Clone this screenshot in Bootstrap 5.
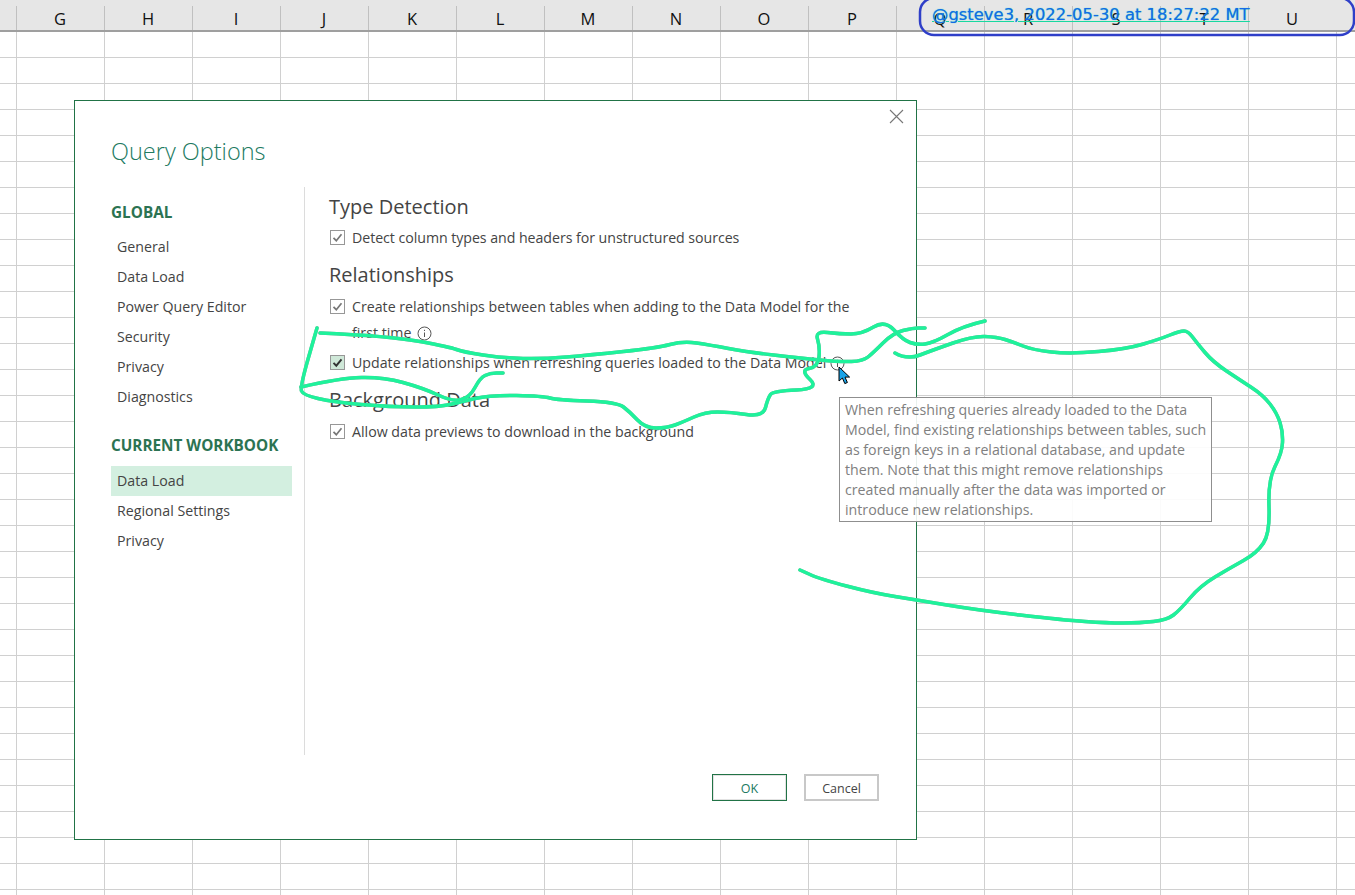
<!DOCTYPE html>
<html lang="en">
<head>
  <meta charset="UTF-8" />
  <title>Query Options</title>
  <link href="https://cdn.jsdelivr.net/npm/bootstrap@5.3.0/dist/css/bootstrap.min.css" rel="stylesheet" />
  <style>
    body {
      width: 1355px;
      height: 895px;
      overflow: hidden;
      position: relative;
      font-family: "Open Sans", sans-serif;
      background-color: #fff;
      background-image:
        linear-gradient(to right, #d0d0d0 1px, transparent 1px),
        linear-gradient(to bottom, #d0d0d0 1px, transparent 1px);
      background-size: 88px 26px;
      background-position: 16px 5px;
    }

    .sheet-head {
      height: 32px;
      background: #e6e6e6;
      border-bottom: 2px solid #9f9f9f;
    }
    .sheet-corner { width: 16px; flex: none; }
    .sheet-col {
      width: 88px;
      flex: none;
      padding-top: 7px;
      text-align: center;
      font-size: 16.5px;
      line-height: 24px;
      color: #111;
      position: relative;
    }
    .sheet-col::before {
      content: "";
      position: absolute;
      left: 0;
      top: 6px;
      bottom: 0;
      width: 1px;
      background: #c0c0c0;
    }

    .qo-window {
      position: absolute;
      left: 74px;
      top: 100px;
      width: 843px;
      height: 740px;
      background: #fff;
      border: 1px solid #217346;
      padding: 34px 37px 38px 36px;
      color: #444;
    }
    .qo-close { position: absolute; right: 12px; top: 8px; background: none; border: 0; padding: 0; line-height: 0; }
    .qo-title {
      font-size: 23.5px;
      font-weight: 300;
      line-height: 32px;
      margin: 0 0 20px;
      color: #217a5f;
    }
    .qo-body { height: 568px; }
    .qo-side { width: 181px; flex: none; margin-right: 12px; }
    .qo-group {
      font-size: 15.3px;
      font-weight: 700;
      line-height: 20px;
      color: #2c7352;
      margin: 15px 0 10px;
    }
    .qo-group-2 { margin: 23px 0 11px; }
    .qo-side .list-group-item {
      border: 0;
      padding: 0 6px;
      font-size: 14.2px;
      line-height: 30px;
      color: #444;
      background: transparent;
      border-radius: 0;
    }
    .qo-side .list-group-item.active { background: #d3efe0; color: #444; }

    .qo-main { border-left: 1px solid #dcdcdc; padding-left: 24px; flex: 1; }
    .qo-head {
      font-size: 20px;
      font-weight: 400;
      line-height: 28px;
      margin: 10px 0 4px;
      color: #444;
    }
    .qo-head-first { margin-top: 6px; }
    .qo-head-gap { margin-bottom: 5px; }
    .qo-row { display: flex; gap: 7px; font-size: 14.2px; line-height: 26px; margin-bottom: 4px; color: #444; }
    .qo-tight { letter-spacing: -.05px; }
    .qo-check.form-check-input {
      flex: none;
      width: 15px;
      height: 15px;
      margin: 5px 0 0 1px;
      border: 1px solid #979797;
      border-radius: 0;
      background-color: #fff;
      background-size: 13px 13px;
      background-image: url("data:image/svg+xml,%3csvg xmlns='http://www.w3.org/2000/svg' viewBox='0 0 13 13'%3e%3cpath fill='none' stroke='%23777' stroke-width='1.7' d='M2.5 6.8l2.8 2.9 5.2-6.4'/%3e%3c/svg%3e");
    }
    .qo-check.qo-hover.form-check-input {
      background-color: #cfe8d8;
      background-image: url("data:image/svg+xml,%3csvg xmlns='http://www.w3.org/2000/svg' viewBox='0 0 13 13'%3e%3cpath fill='none' stroke='%23333' stroke-width='1.9' d='M2.5 6.8l2.8 2.9 5.2-6.4'/%3e%3c/svg%3e");
    }
    .qo-info { vertical-align: -3px; margin-left: 2px; }
    .qo-info-near { margin-left: 0; }

    .qo-foot { margin-top: 19px; gap: 17px; }
    .qo-btn.btn {
      width: 75px;
      height: 27px;
      padding: 0;
      border-radius: 0;
      background: #fff;
      border: 2px solid #c8c8c8;
      font-size: 12.5px;
      line-height: 25px;
      color: #444;
    }
    .qo-btn.btn.qo-ok {
      border: 1px solid #217346;
      box-shadow: inset 0 0 0 1px #e2e2e2;
      line-height: 27px;
      color: #217a5f;
    }

    .qo-tip {
      position: absolute;
      left: 839px;
      top: 397px;
      width: 373px;
      height: 125px;
      padding: 2px 5px;
      background: rgba(255, 255, 255, .9);
      border: 1px solid #8f8f8f;
      font-size: 14.2px;
      line-height: 20px;
      color: #808080;
      white-space: nowrap;
    }
    .qo-cursor { position: absolute; left: 838px; top: 366px; }

    .ink { position: absolute; left: 0; top: 0; pointer-events: none; }
    .ink-line {
      fill: none;
      stroke: #1ef29b;
      stroke-width: 3.5;
      stroke-linecap: round;
      stroke-linejoin: round;
      filter: drop-shadow(.5px .5px .4px #a0a0a0);
    }
    .stamp {
      position: absolute;
      left: 932px;
      top: 5px;
      font-family: "DejaVu Sans", sans-serif;
      font-size: 16.4px;
      line-height: 20px;
      color: #1668e8;
      text-decoration-color: #18d8a0;
      text-shadow: 0 0 1px #18e0b0;
      white-space: nowrap;
    }
  </style>
</head>
<body>
  <div class="sheet-head d-flex" id="sheetHead"><div class="sheet-corner"></div></div>

  <div class="qo-window d-flex flex-column">
    <button class="qo-close" type="button" aria-label="Close">
      <svg width="15" height="15" viewBox="0 0 15 15"><path d="M1 1l13 13M14 1L1 14" stroke="#777" stroke-width="1.1" fill="none"/></svg>
    </button>
    <h1 class="qo-title">Query Options</h1>
    <div class="qo-body d-flex">
      <div class="qo-side">
        <div class="qo-group">GLOBAL</div>
        <div class="list-group">
          <div class="list-group-item">General</div>
          <div class="list-group-item">Data Load</div>
          <div class="list-group-item">Power Query Editor</div>
          <div class="list-group-item">Security</div>
          <div class="list-group-item">Privacy</div>
          <div class="list-group-item">Diagnostics</div>
        </div>
        <div class="qo-group qo-group-2">CURRENT WORKBOOK</div>
        <div class="list-group">
          <div class="list-group-item active">Data Load</div>
          <div class="list-group-item">Regional Settings</div>
          <div class="list-group-item">Privacy</div>
        </div>
      </div>
      <div class="qo-main">
        <h2 class="qo-head qo-head-first">Type Detection</h2>
        <div class="qo-row">
          <input class="form-check-input qo-check" type="checkbox" checked />
          <span class="qo-tight">Detect column types and headers for unstructured sources</span>
        </div>
        <h2 class="qo-head qo-head-gap">Relationships</h2>
        <div class="qo-row">
          <input class="form-check-input qo-check" type="checkbox" checked />
          <span>Create relationships between tables when adding to the Data Model for the<br />first time
            <svg class="qo-info" width="15" height="15" viewBox="0 0 15 15"><circle cx="7.5" cy="7.5" r="6.5" fill="none" stroke="#555"/><path d="M7.5 6.5v4.5M7.5 3.8v1.2" stroke="#555" fill="none"/></svg>
          </span>
        </div>
        <div class="qo-row">
          <input class="form-check-input qo-check qo-hover" type="checkbox" checked />
          <span>Update relationships when refreshing queries loaded to the Data Model
            <svg class="qo-info qo-info-near" width="15" height="15" viewBox="0 0 15 15"><circle cx="7.5" cy="7.5" r="6.5" fill="none" stroke="#555"/><path d="M7.5 6.5v4.5M7.5 3.8v1.2" stroke="#555" fill="none"/></svg>
          </span>
        </div>
        <h2 class="qo-head qo-head-gap">Background Data</h2>
        <div class="qo-row">
          <input class="form-check-input qo-check" type="checkbox" checked />
          <span>Allow data previews to download in the background</span>
        </div>
      </div>
    </div>
    <div class="qo-foot d-flex justify-content-end">
      <button class="btn qo-btn qo-ok" type="button">OK</button>
      <button class="btn qo-btn" type="button">Cancel</button>
    </div>
  </div>

  <div class="qo-tip">When refreshing queries already loaded to the Data<br />Model, find existing relationships between tables, such<br />as foreign keys in a relational database, and update<br />them. Note that this might remove relationships<br />created manually after the data was imported or<br />introduce new relationships.</div>

  <svg class="qo-cursor" width="14" height="19" viewBox="0 0 14 19"><path d="M1 1v14l3.4-3 2.4 5.6 2.6-1.1-2.4-5.4h4.6z" fill="#19a3e8" stroke="#000" stroke-width="1"/></svg>

  <svg class="ink" id="ink" width="1355" height="895"></svg>

  <a class="stamp" href="#">@gsteve3, 2022-05-30 at 18:27:22 MT</a>

  <script>
    // column letters of the sheet behind the dialog
    const cols = "GHIJKLMNOPQRSTU";
    const head = document.getElementById("sheetHead");
    for (const c of cols) {
      const d = document.createElement("div");
      d.className = "sheet-col";
      d.textContent = c;
      head.appendChild(d);
    }

    // hand-drawn marks, traced from the picture
    const strokes = [
      [[320,333],[390,336],[450,347],[463,352],[503,358],[543,359],[590,355],[657,348],[683,341],[710,345],[747,352],[800,358],[840,362],[863,361],[873,353],[893,333],[913,328],[925,328]],
      [[985,321],[963,326],[933,343],[917,345],[903,340],[885,320],[862,334],[840,334],[815,331],[820,347],[818,367],[800,370],[820,389],[773,391],[768,398],[763,417],[730,412],[705,412],[683,422],[667,428],[645,428],[630,412],[617,402],[557,400],[543,396],[490,395],[460,402],[440,407],[390,407],[333,402],[303,395],[300,387],[317,328]],
      [[301,387],[340,378],[383,377],[423,388],[453,402],[470,397],[480,378],[490,373],[503,373]],
      [[895,353],[907,360],[933,350],[973,336],[997,337],[1013,342],[1033,350],[1070,354],[1127,349],[1160,339],[1180,331],[1188,331],[1197,343],[1213,362],[1240,380],[1263,395],[1277,413],[1283,432],[1282,453],[1268,480],[1270,533],[1257,553],[1230,568],[1200,586],[1180,610],[1167,620],[1140,623],[1107,623],[1063,620],[977,610],[917,600],[873,593],[820,579],[800,570]]
    ];

    function smooth(pts) {
      let d = "M" + pts[0].join(" ");
      for (let i = 1; i < pts.length - 1; i++) {
        const mx = (pts[i][0] + pts[i + 1][0]) / 2;
        const my = (pts[i][1] + pts[i + 1][1]) / 2;
        d += " Q" + pts[i].join(" ") + " " + mx + " " + my;
      }
      return d + " L" + pts[pts.length - 1].join(" ");
    }

    const ink = document.getElementById("ink");
    let html = '<rect x="920" y="-2" width="434" height="37" rx="14" fill="none" stroke="#2f3fc8" stroke-width="2.5"/>';
    strokes.forEach(s => { html += '<path class="ink-line" d="' + smooth(s) + '"/>'; });
    ink.innerHTML = html;
  </script>
  <script src="https://cdn.jsdelivr.net/npm/bootstrap@5.3.0/dist/js/bootstrap.bundle.min.js"></script>
</body>
</html>
